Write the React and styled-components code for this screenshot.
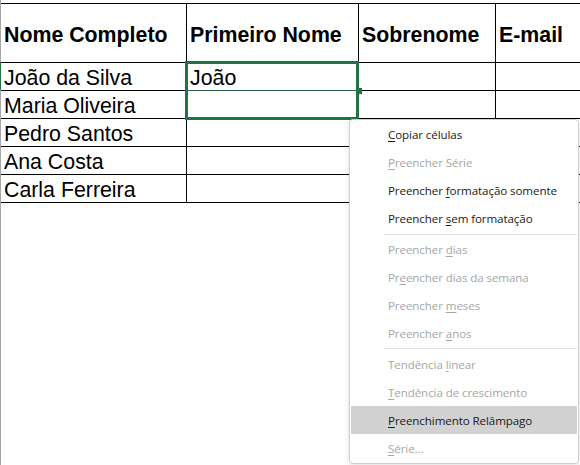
import React from "react";
import styled, { createGlobalStyle } from "styled-components";

const Global = createGlobalStyle`
  html, body { margin: 0; padding: 0; background: #fff; }
  body { width: 580px; height: 465px; overflow: hidden; }
`;

const Page = styled.div`
  position: relative;
  width: 580px;
  height: 465px;
  box-sizing: border-box;
  border-left: 1px solid #a6a6a6;
  padding-top: 3px;
  font-family: "Liberation Sans", Arial, sans-serif;
  color: #000;
`;

const Grid = styled.div`
  position: relative;
  display: grid;
  grid-template-columns: 186px 172px 137px 1fr;
  grid-template-rows: 59px repeat(5, 28px);
  border-top: 1px solid #000;
  width: 600px;
`;

const Cell = styled.div`
  border-right: 1px solid #000;
  border-bottom: 1px solid #000;
  display: flex;
  align-items: ${(p) => (p.$head ? "center" : "flex-end")};
  padding: ${(p) => (p.$head ? "4px 0 0 3px" : "0 0 0 3px")};
  font-size: 21.33px;
  font-weight: ${(p) => (p.$head ? 700 : 400)};
  line-height: 24px;
  white-space: nowrap;
  overflow: hidden;
`;

const Selection = styled.div`
  position: absolute;
  left: 184px;
  top: 57px;
  width: 174px;
  height: 59px;
  box-sizing: border-box;
  border: 3px solid #217346;
  pointer-events: none;
`;

const InnerLine = styled.div`
  position: absolute;
  left: 0;
  right: 0;
  top: 26px;
  height: 1px;
  background: #2f5f44;
`;

const Handle = styled.div`
  position: absolute;
  right: -6px;
  top: 24px;
  width: 6px;
  height: 6px;
  background: #217346;
`;

const RowMark = styled.div`
  position: absolute;
  left: -1px;
  top: 62px;
  width: 1px;
  height: 28px;
  background: #217346;
`;

const Menu = styled.div`
  position: absolute;
  left: 348px;
  top: 119px;
  width: 230px;
  height: 345px;
  box-sizing: border-box;
  background: #fff;
  border: 1px solid #cfcfcf;
  border-radius: 4px;
  box-shadow: 0 2px 6px rgba(0, 0, 0, 0.12);
  padding: 1px;
  display: flex;
  flex-direction: column;
  font-family: "Open Sans", "Noto Sans", sans-serif;
  font-size: 11.6px;
`;

const Item = styled.div`
  height: 28px;
  display: flex;
  align-items: center;
  padding-left: 37px;
  color: ${(p) => (p.$disabled ? "#a6a6a6" : "#1a1a1a")};
  background: ${(p) => (p.$active ? "#d2d2d2" : "transparent")};
  white-space: pre;
  letter-spacing: -0.1px;
  u {
    text-decoration: underline;
    text-underline-offset: 2px;
    text-decoration-thickness: 1px;
  }
`;

const Sep = styled.div`
  height: 1px;
  margin: 1px 0 1px 33px;
  background: #e1e1e1;
`;

const heads = ["Nome Completo", "Primeiro Nome", "Sobrenome", "E-mail"];
const rows = [
  ["João da Silva", "João"],
  ["Maria Oliveira", ""],
  ["Pedro Santos", ""],
  ["Ana Costa", ""],
  ["Carla Ferreira", ""],
];

const Label = ({ pre, u, post }) => (
  <span>
    {pre}
    <u>{u}</u>
    {post}
  </span>
);

const menu = [
  { pre: "", u: "C", post: "opiar células" },
  { pre: "", u: "P", post: "reencher Série", d: true },
  { pre: "Preencher ", u: "f", post: "ormatação somente" },
  { pre: "Preencher ", u: "s", post: "em formatação" },
  { sep: true },
  { pre: "Preencher ", u: "d", post: "ias", d: true },
  { pre: "Pr", u: "e", post: "encher dias da semana", d: true },
  { pre: "Preencher ", u: "m", post: "eses", d: true },
  { pre: "Preencher ", u: "a", post: "nos", d: true },
  { sep: true },
  { pre: "Tendência ", u: "l", post: "inear", d: true },
  { pre: "", u: "T", post: "endência de crescimento", d: true },
  { pre: "", u: "P", post: "reenchimento Relâmpago", active: true },
  { pre: "", u: "S", post: "érie...", d: true },
];

export default function App() {
  return (
    <>
      <Global />
      <Page>
        <Grid>
          {heads.map((h) => (
            <Cell key={h} $head>
              {h}
            </Cell>
          ))}
          {rows.map((r, ri) => (
            <React.Fragment key={ri}>
              <Cell>{r[0]}</Cell>
              <Cell>{r[1]}</Cell>
              <Cell />
              <Cell />
            </React.Fragment>
          ))}
          <Selection>
            <InnerLine />
            <Handle />
          </Selection>
        </Grid>
        <RowMark />
        <Menu>
          {menu.map((m, i) =>
            m.sep ? (
              <Sep key={i} />
            ) : (
              <Item key={i} $disabled={m.d} $active={m.active}>
                <Label pre={m.pre} u={m.u} post={m.post} />
              </Item>
            )
          )}
        </Menu>
      </Page>
    </>
  );
}
